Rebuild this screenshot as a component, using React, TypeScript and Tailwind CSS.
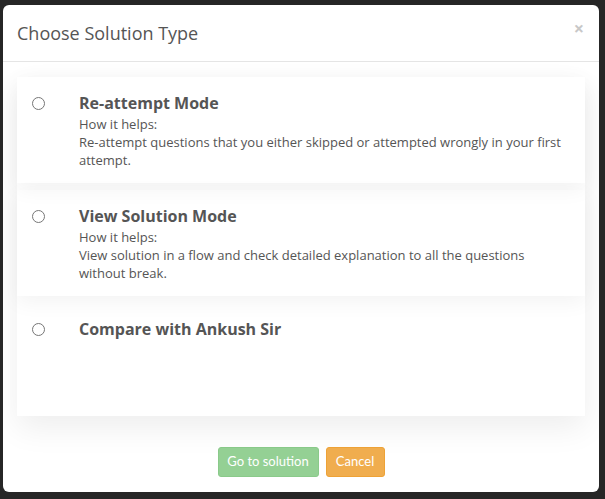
import React, { useState } from 'react';

const options: { id: string; title: string; help?: string }[] = [
    { id: 'reattempt', title: 'Re-attempt Mode', help: 'Re-attempt questions that you either skipped or attempted wrongly in your first attempt.' },
    { id: 'view', title: 'View Solution Mode', help: 'View solution in a flow and check detailed explanation to all the questions without break.' },
    { id: 'compare', title: 'Compare with Ankush Sir' },
];

const App: React.FC = () => {
    const [selected, setSelected] = useState<string | null>(null);

    return (
        <div className="w-[605px] h-[499px] bg-[#262626] pt-[5px] px-[3px] font-['Open_Sans',sans-serif] text-[#555]">
            <div className="w-[596px] h-[487px] bg-white rounded-[6px] flex flex-col overflow-hidden">
                <div className="h-[57px] px-[14px] flex items-center justify-between border-b border-[#e5e5e5] shrink-0">
                    <h4 className="text-[18px] leading-[26px] text-[#555]">Choose Solution Type</h4>
                    <button className="text-[#c8c8c8] text-[18px] leading-none font-bold mt-[-10px] mr-[1px]">×</button>
                </div>
                <div className="px-[14px] pt-[15px] shrink-0">
                    <div className="h-[339px] bg-white shadow-[0_12px_30px_rgba(0,0,0,0.07)]">
                        {options.map(opt => (
                            <div
                                key={opt.id}
                                onClick={() => setSelected(opt.id)}
                                className={`flex px-[15px] pt-[14px] pb-[14px] mb-[7px] cursor-pointer ${opt.help ? 'shadow-[0_6px_20px_rgba(0,0,0,0.05)]' : ''}`}
                            >
                                <div className="w-[47px] shrink-0 pt-[6px]">
                                    <span className="block w-[13px] h-[13px] rounded-full border border-[#767676] bg-white relative">
                                        {selected === opt.id && <span className="absolute inset-[2px] rounded-full bg-[#0075ff]"></span>}
                                    </span>
                                </div>
                                <div className="flex-1">
                                    <div className="text-[16px] leading-[24px] font-bold text-[#555]">{opt.title}</div>
                                    {opt.help && (
                                        <div className="text-[13px] leading-[18px] text-[#555]">
                                            <div>How it helps:</div>
                                            <div>{opt.help}</div>
                                        </div>
                                    )}
                                </div>
                            </div>
                        ))}
                    </div>
                </div>
                <div className="flex justify-center gap-[7px] pt-[31px] font-['Lato',sans-serif]">
                    <button disabled={!selected} className="h-[30px] w-[101px] rounded-[3px] bg-[#5cb85c] border border-[#4cae4c] disabled:opacity-65 text-white text-[13px]">Go to solution</button>
                    <button className="h-[30px] w-[59px] rounded-[3px] bg-[#f0ad4e] border border-[#eea236] text-white text-[13px]">Cancel</button>
                </div>
            </div>
        </div>
    );
};

export default App;
